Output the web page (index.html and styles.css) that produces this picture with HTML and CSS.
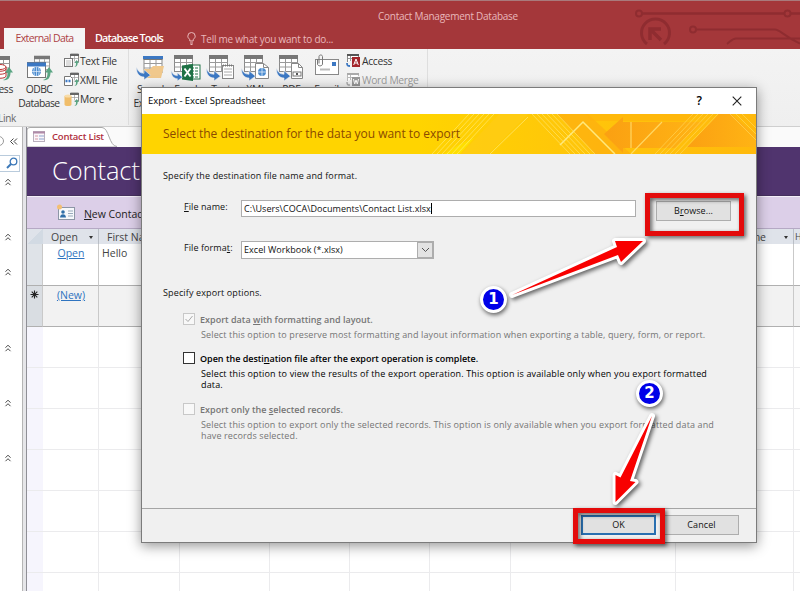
FILE: index.html
```
<!DOCTYPE html>
<html lang="en">
<head>
<meta charset="utf-8">
<title>Contact Management Database</title>
<link rel="stylesheet" href="styles.css">
</head>
<body>
<svg class="defs" aria-hidden="true">
  <symbol id="table" viewBox="0 0 19 17"><rect x=".5" y=".5" width="18" height="16" fill="#fff" stroke="#8a8a8a"/><path d="M.5 7.5h18M.5 12h18M6.5 4v13M12.5 4v13" stroke="#9a9a9a" fill="none"/><rect width="19" height="4" fill="#777"/></symbol>
  <symbol id="blue-arrow" viewBox="0 0 14 13"><path d="M.5 1C1.500 5 4 6.800 7.500 6.800V3.500L13.500 8.500 7.500 12.800V10.200C3 10.200 0 6.500.5 1z" fill="#3c78c3" stroke="#f1f1f1" stroke-width=".5"/></symbol>
  <symbol id="green-arrow" viewBox="0 0 10 14"><path d="M0 13C4 12 4.500 9 4.500 5.500H2L6 0l4 5.500H7.500C7.500 10.500 5 14 0 13z" fill="#5aa583"/></symbol>
  <symbol id="small-link" viewBox="0 0 15 15"><path d="M6.500 5V1h8v8h-4" fill="#fff" stroke="#888"/><path d="M6 2h9" stroke="#666" stroke-width="2"/><path d="M7 5.500h7M10.500 3v5" stroke="#999" stroke-width=".7"/><path d="M9 14c3 0 3-2 3-4h-1.500L12.700 7 15 10h-1.300c0 3-1.700 4.500-4.700 4z" fill="#5aa583"/></symbol>
  <symbol id="chevrons" viewBox="0 0 7 8"><path d="M1 3.700 3.500 1.200 6 3.700M1 7.200 3.500 4.700 6 7.200" fill="none" stroke="#444" stroke-width="1"/></symbol>
</svg>

<header class="titlebar">
  <svg class="circuit" width="170" height="48" viewBox="630 0 170 48" fill="none" stroke="#8a2a2e" stroke-width="2">
    <circle cx="639" cy="13.500" r="3"/><path d="M642 13.500h142M791 13.500h9" stroke-width="2.500"/><circle cx="787.500" cy="13.500" r="3"/>
    <path d="M647 44a14 14 0 1 1 17 0" stroke-width="3"/><path d="M650 40V29h11M650.500 29.500 661 40" stroke-width="3.500"/>
    <circle cx="693" cy="29.500" r="3"/><path d="M696 29.500h79c5 0 9 7 25 14M727 44c3-2 5-5.500 9-5.500h64"/>
  </svg>
  <div class="app-title">Contact Management Database</div>
  <nav class="tabs">
    <span class="tab active">External Data</span>
    <span class="tab">Database Tools</span>
    <span class="tellme"><svg width="9" height="13" viewBox="0 0 9 13" fill="none" stroke="#e8b9bb"><path d="M2.800 9V7.500C1.500 6.500.8 5.500.8 4.200a3.700 3.700 0 0 1 7.400 0c0 1.300-.7 2.300-2 3.300V9zM3 11h3M3.500 12.500h2"/></svg>Tell me what you want to do...</span>
  </nav>
</header>

<section class="ribbon">
  <div class="link-group">
    <div class="group-items">
      <div class="big access"><svg width="32" height="28" viewBox="0 0 32 28"><use href="#table" x="9" y="2" width="19" height="17"/><path d="M12 13v9c0 3 12 3 12 0v-9z" fill="#fff" stroke="#b33"/><path d="M12 18c0 3 12 3 12 0M12 15c0 3 12 3 12 0" fill="none" stroke="#b33"/><ellipse cx="18" cy="13" rx="6" ry="2.500" fill="#fff" stroke="#b33"/><use href="#green-arrow" x="21" y="13" width="10" height="14"/></svg>Access</div>
      <div class="big odbc"><svg width="32" height="28" viewBox="0 0 32 28"><use href="#table" x="11" y="1" width="16" height="16"/><rect x="4.500" y="8.500" width="18" height="15" fill="#fff" stroke="#777"/><path d="M4 10.500h19" stroke="#3c78c3" stroke-width="4"/><circle cx="13.500" cy="17.500" r="4.500" fill="#4c8cd0"/><path d="M9 17.500h9M13.500 13v9M11.500 13.500q-1.500 4 0 8M15.500 13.500q1.500 4 0 8" fill="none" stroke="#e5f0fa" stroke-width=".7"/><use href="#green-arrow" x="20" y="13" width="10" height="14"/></svg>ODBC<br>Database</div>
    </div>
    <div class="group-name">Import &amp; Link</div>
  </div>
  <div class="small-list">
    <div class="small"><svg width="15" height="15" viewBox="0 0 15 15"><use href="#small-link" width="15" height="15"/><rect x=".5" y="5.500" width="8" height="8" fill="#fff" stroke="#777"/><path d="M2 8h5M2 10h5M2 12h5" stroke="#aaa" stroke-width=".8"/></svg>Text File</div>
    <div class="small"><svg width="15" height="15" viewBox="0 0 15 15"><use href="#small-link" width="15" height="15"/><path d="M.5 4.500h6l2 2v7h-8z" fill="#fff" stroke="#777"/><path d="M1.500 9h6" stroke="#3c78c3" stroke-width="2.500" stroke-dasharray="2 1"/></svg>XML File</div>
    <div class="small"><svg width="15" height="15" viewBox="0 0 15 15"><use href="#small-link" width="15" height="15"/><path d="M.5 4v8.500c0 2 7 2 7 0V4z" fill="#f0bd6a"/><ellipse cx="4" cy="4" rx="3.500" ry="1.500" fill="#f8dca8"/></svg>More<i class="caret"></i></div>
  </div>
  <div class="exports">
    <div class="big"><svg width="32" height="28" viewBox="0 0 32 28"><use href="#table" x="8" y="2" width="20" height="17"/><path d="M8 3.500h20" stroke="#3c78c3" stroke-width="3"/><path d="M9 24V15h6l3-3h11l-3 12z" fill="#f0c88c"/><use href="#blue-arrow" x="1" y="12" width="15" height="14"/></svg>Saved<br>Exports</div>
    <div class="big"><svg width="32" height="28" viewBox="0 0 32 28"><use href="#table" x="4" y="1" width="19" height="17"/><rect x="19" y="11" width="11" height="14" fill="#fff" stroke="#217346"/><path d="M21 14h7M21 17h7M21 20h7M21 23h7" stroke="#217346" stroke-dasharray="3 1"/><path d="M12 11.500 23 10v17l-11-1.500z" fill="#1e7145"/><path d="m14.500 14.500 6 8m0-8-6 8" stroke="#fff" stroke-width="1.900"/><use href="#blue-arrow" x="1" y="16" width="12" height="11"/></svg>Excel</div>
    <div class="big"><svg width="32" height="28" viewBox="0 0 32 28"><use href="#table" x="4" y="1" width="19" height="17"/><rect x="17.500" y="11.500" width="11" height="13" fill="#fff" stroke="#888"/><path d="M19 15h8M19 18h8M19 21h8" stroke="#aaa"/><path d="M18 11.500h10" stroke="#777" stroke-width="2" stroke-dasharray="1 1"/><use href="#blue-arrow" x="1" y="13" width="15" height="14"/></svg>Text</div>
    <div class="big"><svg width="32" height="28" viewBox="0 0 32 28"><use href="#table" x="4" y="1" width="19" height="17"/><path d="M15.500 9.500h8l5 4v11h-13z" fill="#fff" stroke="#888"/><path d="M23.500 9.500v4h5" fill="none" stroke="#888"/><circle cx="22" cy="18" r="4" fill="#4c8cd0"/><path d="M18 18h8M22 14v8" stroke="#e5f0fa" stroke-width=".8"/><use href="#blue-arrow" x="1" y="13" width="15" height="14"/></svg>XML</div>
    <div class="big"><svg width="32" height="28" viewBox="0 0 32 28"><use href="#table" x="4" y="1" width="19" height="17"/><path d="M16.500 9.500h7l4 4v11h-11z" fill="#fff" stroke="#888"/><path d="M23.500 9.500v4h4" fill="none" stroke="#888"/><rect x="18" y="18" width="8" height="4" fill="#fff" stroke="#777"/><path d="M21 20h2" stroke="#555" stroke-width="2"/><use href="#blue-arrow" x="1" y="13" width="15" height="14"/></svg>PDF</div>
    <div class="big"><svg width="32" height="28" viewBox="0 0 32 28"><rect x="4.500" y="5.500" width="23" height="15" fill="#fff" stroke="#888"/><rect x="21" y="8" width="4" height="4" fill="#3c78c3"/><path d="M9 15.500h10" stroke="#bbb" stroke-width="2"/><path d="M6.500 5v5c0 2.500 5 2.500 5 0V2.500c0-2-3.500-2-3.500 0V9.500" fill="none" stroke="#777"/></svg>Email</div>
  </div>
  <div class="small-list merge">
    <div class="small"><svg width="15" height="15" viewBox="0 0 15 15"><path d="M1.500 9V1.500h11V4" fill="#fff" stroke="#888"/><path d="M1 2h12" stroke="#555" stroke-width="2"/><path d="M2 5.500h6M4.500 3v5" stroke="#999"/><rect x="6" y="4" width="8" height="10" fill="#a4262c"/><path d="m7.700 12 2.300-6 2.300 6M8.500 10h3" stroke="#fff" fill="none"/><path d="M1 10c0 3 1 3 3 3" stroke="#3c78c3" fill="none" stroke-width="1.800"/></svg>Access</div>
    <div class="small disabled"><svg width="15" height="15" viewBox="0 0 15 15"><path d="M1.500 9V1.500h11V4" fill="#fff" stroke="#bbb"/><path d="M1 2h12" stroke="#aaa" stroke-width="2"/><path d="M2 5.500h6M4.500 3v5" stroke="#bbb"/><rect x="6" y="5" width="8" height="9" fill="#999"/><path d="m7.500 7 1.200 5L10 8l1.300 4 1.200-5" stroke="#fff" fill="none"/><path d="M1 10c0 3 1 3 3 3" stroke="#aaa" fill="none" stroke-width="1.500"/></svg>Word Merge</div>
  </div>
</section>

<main class="workspace">
  <aside class="navpane">
    <div class="nav-head"><svg width="22" height="12" viewBox="0 0 22 12" fill="none"><circle cx="-1" cy="6" r="4.500" stroke="#999"/><path d="m13.500 3.500-3 3 3 3m3.500-6-3 3 3 3" stroke="#444"/></svg></div>
    <div class="nav-search"><svg width="12" height="12" viewBox="0 0 12 12" fill="none" stroke="#3c78b8"><circle cx="7.500" cy="4.500" r="3.300" stroke-width="1.300"/><path d="M5 7 1 11" stroke-width="2"/></svg></div>
    <div class="nav-groups">
      <svg><use href="#chevrons"/></svg><svg><use href="#chevrons"/></svg><svg><use href="#chevrons"/></svg><svg><use href="#chevrons"/></svg><svg><use href="#chevrons"/></svg><svg><use href="#chevrons"/></svg>
    </div>
  </aside>
  <div class="splitter"></div>
  <section class="document">
    <div class="doc-tabs">
      <svg width="90" height="20" viewBox="0 0 90 20"><path d="M0 20V3Q0 .5 3 .5H75C82 .5 82 19.500 90 19.500V20z" fill="#fff" stroke="#a9a9a9"/><rect x="6.500" y="4.500" width="11" height="10" fill="#fbf6fa" stroke="#b9b0bd"/><path d="M6 5.500h12" stroke="#b08aa8" stroke-width="2"/><path d="M8 9h3M8 12h3" stroke="#d49aa6"/><path d="M12 9h5M12 12h5" stroke="#8fa5cf"/></svg>
      <span>Contact List</span>
    </div>
    <div class="form-title">Contact List</div>
    <div class="form-actions"><svg width="18" height="17" viewBox="0 0 18 17"><rect x="1.500" y="3.500" width="16" height="12" fill="#f6f8fb" stroke="#8d96a6"/><circle cx="6" cy="8" r="1.800" fill="#2f6ea8"/><path d="M3 13.500c0-4.500 6-4.500 6 0z" fill="#2f6ea8"/><path d="M11 7h5M11 9.500h5M11 12h5" stroke="#9ab"/><circle cx="2.500" cy="3" r="2.500" fill="#f3bf73"/></svg><span><u>N</u>ew Contact</span></div>
    <div class="sheet">
      <div class="row head"><i class="corner"></i><b>Open<i class="caret"></i></b><b>First Name</b><b></b><b></b><b></b><b></b><b></b><b class="end">me<i class="caret"></i></b><b class="cut">H</b></div>
      <div class="row record"><i></i><a>Open</a><b>Hello</b><b></b><b></b><b></b><b></b><b></b><b></b><b></b></div>
      <div class="row record new"><i><svg width="9" height="9" viewBox="0 0 9 9" stroke="#222" stroke-width="1.100"><path d="M4.500.5v8M.5 4.500h8M1.700 1.700l5.600 5.600M7.300 1.700 1.700 7.300"/></svg></i><a>(New)</a><b></b><b></b><b></b><b></b><b></b><b></b><b></b><b></b></div>
      <div class="row empty"><i></i><b></b><b></b><b></b><b></b><b></b><b></b><b></b><b></b><b></b></div>
      <div class="row empty"><i></i><b></b><b></b><b></b><b></b><b></b><b></b><b></b><b></b><b></b></div>
      <div class="row empty"><i></i><b></b><b></b><b></b><b></b><b></b><b></b><b></b><b></b><b></b></div>
      <div class="row empty"><i></i><b></b><b></b><b></b><b></b><b></b><b></b><b></b><b></b><b></b></div>
      <div class="row empty"><i></i><b></b><b></b><b></b><b></b><b></b><b></b><b></b><b></b><b></b></div>
      <div class="row empty"><i></i><b></b><b></b><b></b><b></b><b></b><b></b><b></b><b></b><b></b></div>
      <div class="row empty"><i></i><b></b><b></b><b></b><b></b><b></b><b></b><b></b><b></b><b></b></div>
    </div>
  </section>
</main>

<div class="dialog" role="dialog">
  <div class="dialog-title"><span>Export - Excel Spreadsheet</span><span class="help">?</span><svg width="10" height="10" viewBox="0 0 10 10" stroke="#222" stroke-width="1.100"><path d="m.7.7 8.600 8.600M9.300.7.7 9.300"/></svg></div>
  <div class="banner">
    <svg width="614" height="40" viewBox="0 0 614 40" fill="none">
      <defs>
        <linearGradient id="gold"><stop offset=".45" stop-color="#ffd400"/><stop offset=".7" stop-color="#ffc60a"/><stop offset="1" stop-color="#ffb90c"/></linearGradient>
        <linearGradient id="arrow"><stop stop-color="#fba012"/><stop offset="1" stop-color="#ffb414"/></linearGradient>
      </defs>
      <path d="M0 0h614v40H0z" fill="url(#gold)"/>
      <path d="M357 0h29l-40 40h-27z" fill="#ffcc14" opacity=".8"/>
      <path d="M318 30l14-6-14 16h-16z" fill="#ffe600" opacity=".7"/>
      <path d="M415 0h31l43 40h-36z" fill="#fdae10" opacity=".7"/>
      <path d="M444 0h110l-8 7h-97z" fill="#ffb20c" opacity=".6"/>
      <path d="M462 20 481 3v5h80l-28 26h-52v5z" fill="url(#arrow)"/>
      <path d="M589 0h-12l-32 33h69V21z" fill="url(#arrow)"/>
      <path d="M327 0l-37 40M332 0l-37 40M337 0l-37 40M342 0l-37 40M347 0l-37 40M352 0l-37 40" stroke="#ffed80" stroke-width="1" opacity=".6"/>
      <path d="m386 3-38 37" stroke="#ffe66e" opacity=".8"/>
      <path d="M390 0l38 40M395 0l38 40M400 0l38 40M405 0l38 40M410 0l38 40M415 0l38 40" stroke="#ffe97a" opacity=".6"/>
      <path d="m418 31 23-23 32 32" stroke="#ffe97c" stroke-width="1.500"/>
      <path d="M489 8v26M489 40l31-32" stroke="#ffdf70" stroke-width="1.200" opacity=".85"/>
      <path d="M551 0l-38 40M556 0l-38 40M561 0l-38 40M566 0l-38 40M571 0l-38 40M576 0l-38 40" stroke="#ffdb60" opacity=".6"/>
      <path d="m588 0 26 26M594 0l20 20M600 0l14 14" stroke="#ffdb60" opacity=".6"/>
    </svg>
    <h1>Select the destination for the data you want to export</h1>
  </div>
  <div class="dialog-body">
    <p class="section-label">Specify the destination file name and format.</p>
    <div class="field name"><label><u>F</u>ile name:</label><div class="input">C:\Users\COCA\Documents\Contact List.xlsx<i class="cursor"></i></div><button class="btn browse">B<u>r</u>owse...</button></div>
    <div class="field format"><label>File forma<u>t</u>:</label><div class="select"><span>Excel Workbook (*.xlsx)</span><i><svg width="9" height="6" viewBox="0 0 9 6"><path d="M1 1 4.500 4.500 8 1" fill="none" stroke="#555"/></svg></i></div></div>
    <p class="section-label options">Specify export options.</p>
    <div class="option disabled first"><i class="check"><svg width="10" height="10" viewBox="0 0 10 10"><path d="M1.500 5 4 7.500 8.500 2" fill="none" stroke="#aaa"/></svg></i><strong>Export data <u>w</u>ith formatting and layout.</strong><p>Select this option to preserve most formatting and layout information when exporting a table, query, form, or report.</p></div>
    <div class="option second"><i class="check"></i><strong>Open the desti<u>n</u>ation file after the export operation is complete.</strong><p>Select this option to view the results of the export operation. This option is available only when you export formatted<br>data.</p></div>
    <div class="option disabled third"><i class="check"></i><strong>Export only the <u>s</u>elected records.</strong><p>Select this option to export only the selected records. This option is only available when you export formatted data and<br>have records selected.</p></div>
  </div>
  <div class="dialog-footer"><button class="btn primary">OK</button><button class="btn">Cancel</button></div>
</div>

<div class="mark mark-browse"></div>
<div class="mark mark-ok"></div>
<svg class="arrows" width="800" height="591" viewBox="0 0 800 591">
  <g fill="#f80000" stroke="#fff" stroke-width="6" stroke-linejoin="round" paint-order="stroke">
    <path d="M512 295 617 247 615 241 643 241 621 262 618 255z"/>
    <path d="M652 416 620.500 477.500 615.500 475 615.500 502 635.500 482 630 481z"/>
  </g>
</svg>
<div class="step step-one">1</div>
<div class="step step-two">2</div>
</body>
</html>
```
FILE: styles.css
```
* { box-sizing: border-box; }
body {
  margin: 0;
  width: 800px;
  height: 591px;
  overflow: hidden;
  position: relative;
  background: #fff;
  color: #444;
  font: 10px/14px "Open Sans", "Noto Sans", sans-serif;
}
svg { display: block; flex: none; }
i, b { font-style: normal; font-weight: 400; }
p, h1 { margin: 0; }
u { text-underline-offset: 1px; }
.defs { position: absolute; width: 0; height: 0; }
.caret { display: inline-block; border: 2.5px solid transparent; border-top: 3px solid #333; border-bottom: 0; }

/* title bar */
.titlebar { position: relative; height: 49px; background: #a4373a; border-top: 1px solid #a97a7c; color: #e9b8ba; }
.circuit { position: absolute; right: 0; top: -1px; opacity: .8; }
.app-title { height: 27px; padding: 8px 0 0 378px; letter-spacing: -.26px; }
.tabs { display: flex; height: 21px; padding-left: 4px; line-height: 20px; }
.tab { width: 81px; text-align: center; color: #fff; font-weight: 600; letter-spacing: -.75px; font-size: 10.5px; margin-right: 5px; white-space: nowrap; }
.tab + .tab { width: 80px; letter-spacing: -.82px; margin-left: -1px; font-size: 10.8px; }
.tab.active { background: #f5f5f5; color: #ad3f45; font-weight: 400; letter-spacing: -.6px; font-size: 10.5px; }
.tellme { display: flex; align-items: center; gap: 5px; margin-left: 13px; letter-spacing: -.24px; }

/* ribbon */
.ribbon { display: flex; height: 78px; background: linear-gradient(#f3f3f3, #efefef); border-bottom: 1px solid #cfcfcf; overflow: hidden; color: #333; letter-spacing: -.3px; white-space: nowrap; }
.link-group { width: 61px; flex: none; }
.group-items { display: flex; height: 63px; }
.big { display: flex; flex-direction: column; align-items: center; text-align: center; flex: none; width: 35.2px; padding-top: 5px; }
.big.access { width: 36px; margin-left: -20px; }
.big.odbc { width: 46px; letter-spacing: -.5px; }
.link-group .big { font-size: 10.3px; }
.group-name { width: 70px; margin-left: -54px; text-align: right; color: #666; line-height: 13px; }
.small-list { width: 67px; flex: none; padding: 2px 0 0 3px; }
.small { display: flex; align-items: center; gap: 1px; height: 19.3px; font-size: 10.3px; }
.small .caret { margin-left: 3px; }
.small.disabled { color: #9b9b9b; }
.exports { display: flex; width: 216px; height: 76px; border-left: 1px solid #dedede; padding-left: 4px; }
.exports .big { font-size: 10.3px; }
.merge { width: 84px; padding-left: 2px; border-right: 1px solid #dedede; }

/* workspace */
.workspace { display: flex; height: 464px; }
.navpane { width: 22px; background: #fff; }
.nav-head { height: 28px; padding-top: 8px; }
.nav-search { height: 17px; width: 20px; border: 1px solid #b9cbdc; border-left: 0; padding: 1px 0 0 6px; }
.nav-groups svg { width: 8px; height: 8px; margin-left: 4px; }
.nav-groups svg:nth-child(1) { margin-top: 6px; }
.nav-groups svg:nth-child(2) { margin-top: 47px; }
.nav-groups svg:nth-child(3) { margin-top: 27px; }
.nav-groups svg:nth-child(4) { margin-top: 68px; }
.nav-groups svg:nth-child(5) { margin-top: 47px; }
.nav-groups svg:nth-child(6) { margin-top: 47px; }
.splitter { width: 5px; background: #e6e6e9; border-left: 1px solid #b5b5b5; border-right: 1px solid #8f8f96; }
.document { flex: 1; min-width: 0; }
.doc-tabs { height: 20px; background: #fafafa; display: grid; }
.doc-tabs svg, .doc-tabs span { grid-area: 1 / 1; }
.doc-tabs span { padding-left: 25px; line-height: 19px; font-size: 9.500px; font-weight: 600; letter-spacing: -.2px; color: #b03040; }
.form-title { height: 49px; padding-left: 25px; background: #50346e; border-bottom: 1px solid #46305e; color: #fff; font-size: 25.500px; font-weight: 300; line-height: 47px; letter-spacing: -.1px; }
.form-actions { display: flex; align-items: center; gap: 9px; height: 33px; padding-left: 30px; background: #dccfe8; border-top: 1px solid #f4eef8; border-bottom: 1px solid #b5a9c4; color: #222; font-size: 10.500px; letter-spacing: -.05px; white-space: nowrap; }
.form-actions span { margin-top: 2px; }
.row { display: grid; grid-template-columns: 16px 56px 81px 90px 80px 80px 81px 165px 118px 1fr; height: 41px; font-size: 10.500px; }
.row > * { border-right: 1px solid #c9c9c9; border-bottom: 1px solid #b0b0b0; padding-left: 3px; min-width: 0; overflow: hidden; white-space: nowrap; }
.row > :last-child { border-right: 0; }
.row > i { background: #dfe3e8; padding: 0; }
.row.head { height: 15px; background: #dfe3ea; line-height: 16px; color: #444; }
.row.head > * { border-bottom: 0; padding-left: 8px; border-color: #b9bec6; }
.row.head > .corner { border-right: 0; padding: 0; background: linear-gradient(135deg, #dfe3ea 50%, #d2dae3 50%); }
.row.head .caret { margin-left: 11px; vertical-align: 2px; }
.row.head .end { text-align: right; padding-right: 5px; }
.row.head .end .caret { margin-left: 18px; }
.row.head > .cut { padding-left: 1px; font-size: 9px; }
.row.record a { padding: 2px 0 0 1px; text-align: center; text-decoration: underline; color: #2f74c0; }
.row.record b { padding-top: 2px; }
.row.record { height: 42px; }
.row.new { height: 41px; background: #f2f2f2; }
.row.new i { background: #d9dde2; }
.row.new svg { margin: 4px 0 0 3px; }
.row.empty > * { border-color: #ebebed; }
.row.empty > i { background: #f6f5fd; border-right: 0; }

/* dialog */
.dialog { position: absolute; left: 141px; top: 87px; width: 616px; height: 456px; display: flex; flex-direction: column; background: #f0f0f0; border: 1px solid #7b7b7b; box-shadow: 0 3px 12px rgba(0, 0, 0, .42); color: #111; font-size: 9px; letter-spacing: .08px; white-space: nowrap; }
.dialog-title { display: flex; align-items: center; height: 26px; padding: 0 14px 0 6px; background: #fff; font-size: 9.500px; letter-spacing: -.02px; color: #000; }
.dialog-title .help { margin-left: auto; margin-right: 30px; font-size: 12px; font-weight: 600; }
.banner { display: grid; height: 40px; }
.banner svg, .banner h1 { grid-area: 1 / 1; }
.banner h1 { padding-left: 21px; font-size: 12px; font-weight: 400; line-height: 40px; letter-spacing: -.03px; color: #8a4a00; }
.dialog-body { flex: 1; padding: 15px 21px 0; }
.section-label { line-height: 14px; letter-spacing: .13px; }
.field { display: flex; align-items: flex-start; padding-left: 21px; }
.field label { width: 57px; line-height: 14px; }
.field.name { margin-top: 17px; height: 41px; }
.input { width: 395px; height: 17px; background: #fff; border: 1px solid #adadad; line-height: 15px; padding-left: 2px; letter-spacing: .05px; }
.cursor { display: inline-block; width: 1px; height: 11px; background: #000; vertical-align: -2px; }
.btn { width: 75px; height: 20px; padding: 0; border: 1px solid #adadad; background: #e1e1e1; color: #111; font: 9px/16px "Open Sans", "Noto Sans", sans-serif; letter-spacing: .08px; }
.btn.browse { margin-left: 20px; margin-top: 1px; }
.select { display: flex; justify-content: space-between; width: 193px; height: 18px; background: #fff; border: 1px solid #adadad; line-height: 16px; padding-left: 2px; letter-spacing: .04px; }
.select i { display: flex; align-items: center; justify-content: center; width: 16px; background: #e3e3e3; border: 1px solid #adadad; }
.field.format { height: 18px; }
.section-label.options { margin-top: 27px; }
.option { display: grid; grid-template-columns: 17px auto; padding-left: 20px; line-height: 14px; color: #000; align-content: start; }
.option strong { font-weight: 600; letter-spacing: -.01px; }
.option.disabled strong { letter-spacing: .02px; }
.option p { grid-column: 2; padding-left: 1px; margin-top: 2px; line-height: 11px; letter-spacing: .13px; }
.option.second p { letter-spacing: .146px; }
.option.disabled { color: #757575; }
.check { width: 12px; height: 12px; border: 1px solid #333; background: #fff; }
.disabled .check { border-color: #c8c8c8; background: #f8f8f8; }
.option.first { margin-top: 13px; height: 39px; }
.option.second { height: 51px; }
.dialog-footer { display: flex; gap: 8px; justify-content: flex-end; height: 34px; padding: 6px 17px 0 0; border-top: 1px solid #a5a5a5; }
.btn.primary { border: 2px solid #2a6fb0; }

/* annotations */
.mark { position: absolute; border: 5px solid #e30b0b; filter: drop-shadow(2px 2px 2px rgba(0, 0, 0, .6)); }
.mark-browse { left: 645px; top: 193px; width: 99px; height: 43px; }
.mark-ok { left: 573px; top: 508px; width: 92px; height: 36px; }
.arrows { position: absolute; left: 0; top: 0; filter: drop-shadow(2px 2px 2px rgba(0, 0, 0, .6)); }
.step { position: absolute; width: 27px; height: 27px; border: 3px solid #fff; border-radius: 50%; background: #0000e8; color: #fff; font: 700 15px/21px "DejaVu Sans", sans-serif; text-align: center; box-shadow: 1px 2px 4px rgba(0, 0, 0, .6); }
.step-one { left: 480px; top: 286px; }
.step-two { left: 636px; top: 380px; }
```
